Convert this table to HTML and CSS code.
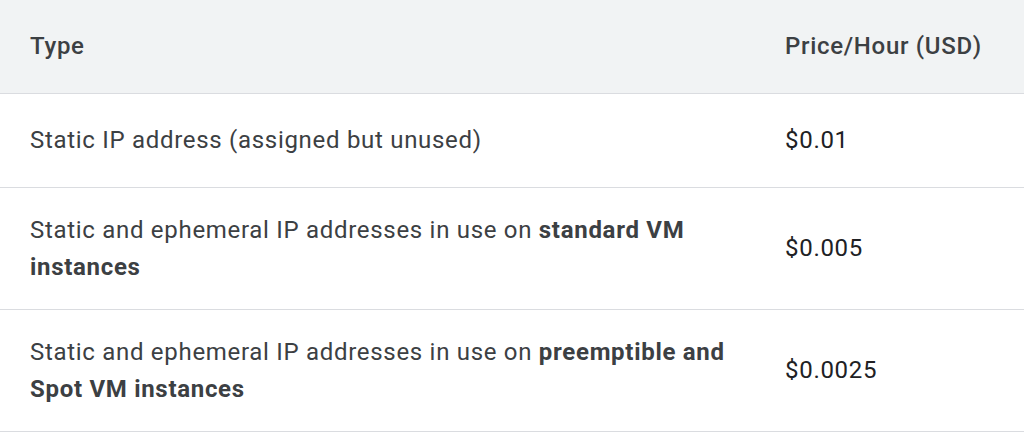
FILE: index.html
```html
<!DOCTYPE html>
<html lang="en">
<head>
<meta charset="utf-8">
<title>IP address pricing</title>
<link rel="stylesheet" href="styles.css">
</head>
<body>
<div class="table">
  <div class="row head">
    <div class="cell">Type</div>
    <div class="cell">Price/Hour (USD)</div>
  </div>
  <div class="row single">
    <div class="cell">Static IP address (assigned but unused)</div>
    <div class="cell price">$0.01</div>
  </div>
  <div class="row">
    <div class="cell">Static and ephemeral IP addresses in use on <b>standard VM</b> <b>instances</b></div>
    <div class="cell price">$0.005</div>
  </div>
  <div class="row">
    <div class="cell">Static and ephemeral IP addresses in use on <b>preemptible and</b> <b>Spot VM instances</b></div>
    <div class="cell price">$0.0025</div>
  </div>
</div>
</body>
</html>
```

FILE: styles.css
```css
html, body {
  margin: 0;
  padding: 0;
  background: #ffffff;
}
body {
  font-family: Roboto, "Noto Sans", "Liberation Sans", sans-serif;
  font-size: 24px;
  line-height: 37px;
  letter-spacing: 0.7px;
  color: #3c4043;
}
.table {
  display: flex;
  flex-direction: column;
  width: 1024px;
}
.row {
  display: grid;
  grid-template-columns: 755px 1fr;
  align-items: center;
  border-bottom: 1px solid #dadce0;
  box-sizing: border-box;
}
.cell {
  padding: 23.5px 24px 23.5px 30px;
}
.head {
  background: #f1f3f4;
  min-height: 94px;
  font-weight: 500;
}
.single {
  min-height: 94px;
}
.price {
  color: #202124;
}
b {
  font-weight: 700;
}
```
